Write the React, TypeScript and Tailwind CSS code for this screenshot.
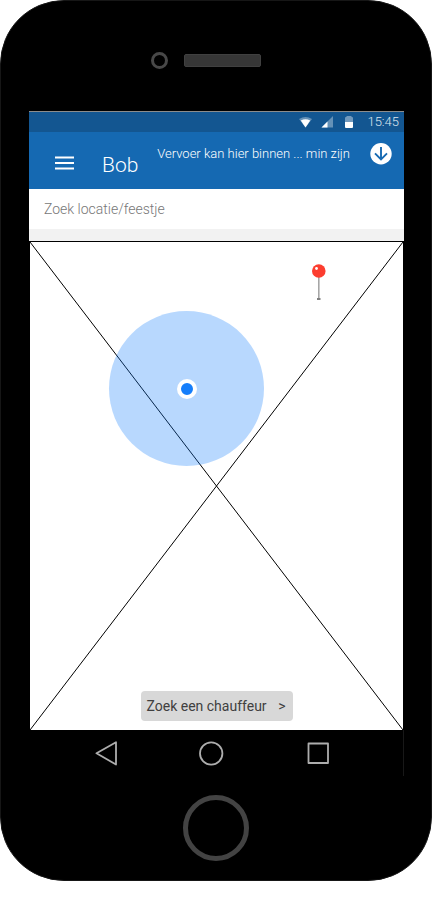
import React from "react";

function StatusBar() {
  return (
    <div className="flex h-[21px] items-center justify-end border-t border-[#8c8c8c] bg-[#135691] pr-[5px] text-white">
      <svg className="mr-2 h-3 w-3.5" viewBox="0 0 14 12" aria-hidden="true">
        <path d="M0 3Q6.500 -1.200 13 3L6.500 11.500Z" fill="#fff" fillOpacity="0.35" />
        <path d="M1.800 4.600Q6.500 2 11.200 4.600L6.500 11.500Z" fill="#fff" />
      </svg>
      <svg className="mr-3 h-3 w-3" viewBox="0 0 12 12" aria-hidden="true">
        <path d="M12 0V11.500H0.500Z" fill="#fff" fillOpacity="0.35" />
        <path d="M6.500 5.500V11.500H0.500Z" fill="#fff" />
      </svg>
      <svg className="mr-3.5 h-3 w-2" viewBox="0 0 8 12" aria-hidden="true">
        <path d="M0 6V2Q0 1 1 1L2 0H6L7 1Q8 1 8 2V6Z" fill="#fff" fillOpacity="0.4" />
        <path d="M0 6H8V11Q8 12 7 12H1Q0 12 0 11Z" fill="#fff" />
      </svg>
      <span className="text-[13px] leading-5 font-light text-[#dce6ef]">15:45</span>
    </div>
  );
}

function Header() {
  return (
    <header className="flex h-[57px] bg-[#1569b2] pr-3 pl-[25px] text-white">
      <button type="button" aria-label="Menu" className="mt-5 h-6 w-5 shrink-0">
        <svg className="h-6 w-5" viewBox="0 0 20 24" aria-hidden="true">
          <path d="M1 5.500H20M1 11H20M1 16.500H20" stroke="#fff" strokeWidth="2.200" />
        </svg>
      </button>
      <h1 className="mt-5 ml-7 text-[21px] leading-[27px] font-light">Bob</h1>
      <p className="mt-3 ml-auto text-[13px] leading-5 font-light whitespace-nowrap">
        Vervoer kan hier binnen ... min zijn
      </p>
      <button type="button" aria-label="Omlaag" className="mt-[11px] ml-5 h-[22px] w-[22px] shrink-0">
        <svg className="h-[22px] w-[22px]" viewBox="0 0 22 22" aria-hidden="true">
          <circle cx="11" cy="10.700" r="10.700" fill="#fff" />
          <path d="M11 4V16.500M5 10.300L11 16.300L17 10.300" fill="none" stroke="#1569b2" strokeWidth="1.900" />
        </svg>
      </button>
    </header>
  );
}

function MapArea() {
  return (
    <main className="relative flex h-[489px] items-end justify-center border border-b-0 border-black bg-white pb-[9px]">
      <svg className="absolute inset-0 h-full w-full" viewBox="0 0 373 488" preserveAspectRatio="none" aria-hidden="true">
        <path d="M0 0L373 488M373 0L0 488" stroke="#000" strokeWidth="1" fill="none" />
      </svg>
      <div className="absolute top-[69px] left-[79px] flex h-[155px] w-[155px] items-center justify-center rounded-full bg-[#157efb]/30">
        <div className="h-5 w-5 rounded-full border-4 border-white bg-[#157efb]" />
      </div>
      <svg className="absolute top-[22px] left-[281px] h-9 w-4" viewBox="0 0 16 36" aria-hidden="true">
        <path d="M7.800 13V35" stroke="#a6a6a6" strokeWidth="1.600" />
        <path d="M6 35H9.500" stroke="#808080" strokeWidth="2" />
        <circle cx="7.800" cy="7" r="6.800" fill="#fc3d2f" />
        <circle cx="5.500" cy="4.500" r="1.400" fill="#fff" />
      </svg>
      <button
        type="button"
        className="relative flex h-[30px] w-[152px] items-center justify-between rounded bg-[#d8d8d8] pr-[7px] pl-1.5 text-sm text-[#404040]"
      >
        <span>Zoek een chauffeur</span>
        <span>&gt;</span>
      </button>
    </main>
  );
}

function NavigationBar() {
  return (
    <nav className="flex h-[46px] items-center justify-center gap-[78px] border-r border-[#181818] bg-black pr-2">
      <button type="button" aria-label="Terug" className="h-7 w-7">
        <svg className="h-7 w-7" viewBox="0 0 28 28" fill="none" stroke="#adadad" strokeWidth="1.800" strokeLinejoin="round" aria-hidden="true">
          <path d="M24 3.200V25.500L4.500 14.300Z" />
        </svg>
      </button>
      <button type="button" aria-label="Start" className="h-7 w-7">
        <svg className="h-7 w-7" viewBox="0 0 28 28" fill="none" stroke="#adadad" strokeWidth="1.800" aria-hidden="true">
          <circle cx="13.200" cy="14.500" r="11.200" />
        </svg>
      </button>
      <button type="button" aria-label="Overzicht" className="h-7 w-7">
        <svg className="h-7 w-7" viewBox="0 0 28 28" fill="none" stroke="#adadad" strokeWidth="1.800" strokeLinejoin="round" aria-hidden="true">
          <rect x="4.500" y="4.500" width="19.500" height="19.500" />
        </svg>
      </button>
    </nav>
  );
}

export default function App() {
  return (
    <div className="bg-white pb-5 font-[Roboto,sans-serif]">
      <div className="rounded-[64px] border border-[#161616] bg-black pr-[27px] pl-7">
        <div className="flex h-[110px] items-center justify-center gap-4 pt-2 pr-[22px]">
          <div className="h-[17px] w-[17px] rounded-full border-3 border-[#484848]" />
          <div className="h-[13px] w-[77px] rounded-xs border border-[#404040] bg-[#363636]" />
        </div>
        <StatusBar />
        <Header />
        <input
          type="text"
          aria-label="Zoek locatie/feestje"
          placeholder="Zoek locatie/feestje"
          className="block h-10 w-full bg-white px-[15px] text-sm font-light text-[#404040] outline-none placeholder:text-[#777777]"
        />
        <div className="h-3 bg-[#f2f2f2]" />
        <MapArea />
        <NavigationBar />
        <div className="flex h-[104px] items-center justify-center pr-px">
          <button
            type="button"
            aria-label="Thuisknop"
            className="h-[66px] w-[66px] rounded-full border-5 border-[#434343] bg-black"
          />
        </div>
      </div>
    </div>
  );
}
